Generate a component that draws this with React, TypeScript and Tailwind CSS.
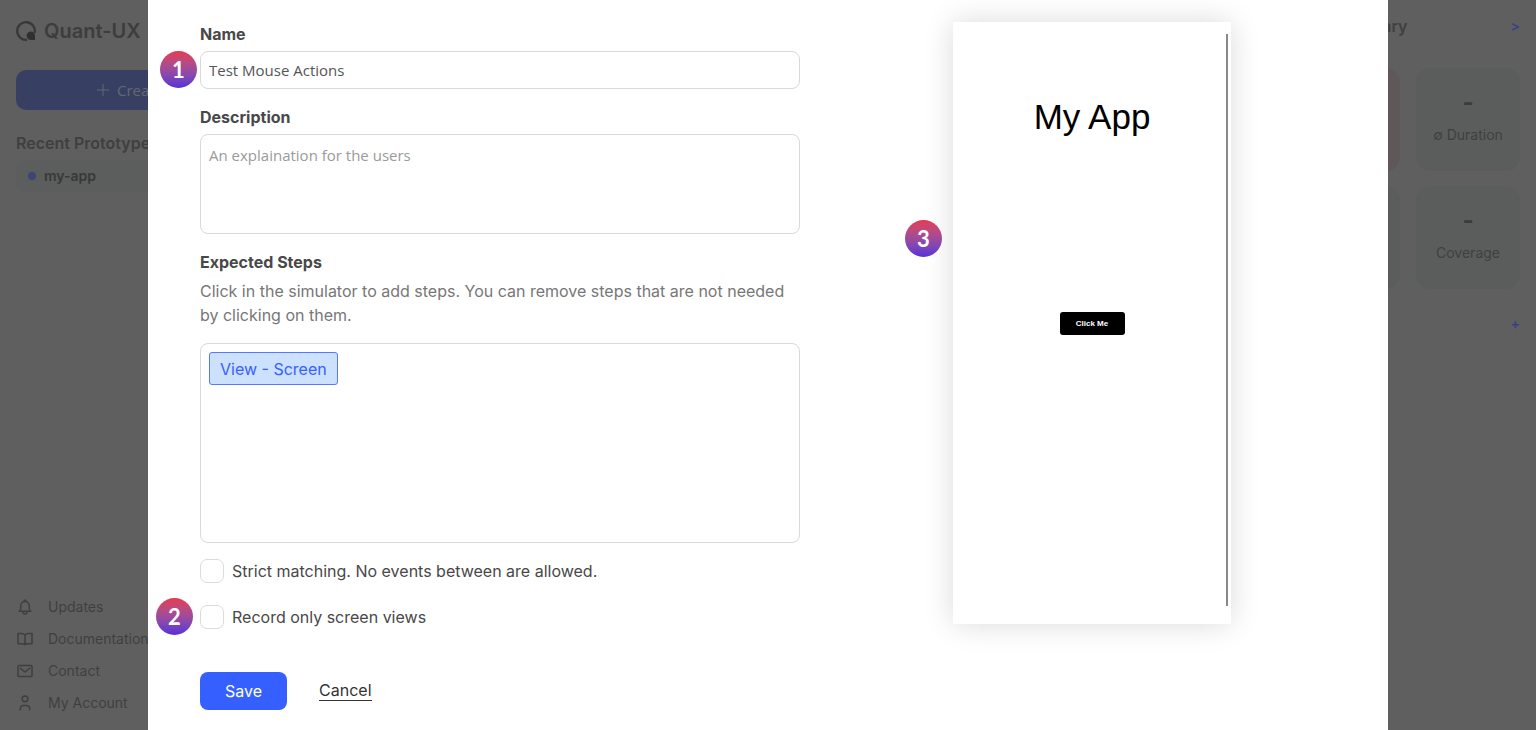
import { useState } from "react";
import type { ReactNode } from "react";

function Logo() {
  return (
    <svg viewBox="0 0 20 20" className="size-5 shrink-0" fill="none" aria-hidden="true">
      <path d="M18.600 12A8.800 8.800 0 1 0 11 18.750" stroke="#383838" strokeWidth="2.300" />
      <path d="M14.800 10.600a4.200 4.200 0 0 1 4.200 4.200V19h-4.200a4.200 4.200 0 1 1 0-8.400z" fill="#303030" />
    </svg>
  );
}

function LineIcon({ children }: { children: ReactNode }) {
  return (
    <svg
      viewBox="0 0 16 16"
      className="size-4 shrink-0"
      fill="none"
      stroke="currentColor"
      strokeWidth="1.500"
      strokeLinejoin="round"
      aria-hidden="true"
    >
      {children}
    </svg>
  );
}

const links = [
  {
    label: "Updates",
    icon: (
      <path d="M1.600 12.300h12.800M2.800 12.300c.8-1.200 1-3.200 1-5.500a4.200 4.200 0 0 1 8.400 0c0 2.300.2 4.300 1 5.500M7.200 2.500V1.200h1.600v1.300M6 12.500v.6a2 2 0 0 0 4 0v-.6" />
    ),
  },
  {
    label: "Documentation",
    icon: (
      <path d="M8 4C7.200 3 6.200 2.500 4.800 2.500H1v10.300h4.200c1.300 0 2.200.2 2.800 1 .6-.8 1.500-1 2.800-1H15V2.500h-3.800C9.800 2.500 8.800 3 8 4zM8 4v9.800" />
    ),
  },
  {
    label: "Contact",
    icon: (
      <path d="M1.900 2.600h12.200a.9.9 0 0 1 .9.9v9.200a.9.9 0 0 1-.9.9H1.900a.9.900 0 0 1-.9-.9V3.500a.9.900 0 0 1 .9-.9zM2.800 4.800L8 9l5.200-4.200" />
    ),
  },
  {
    label: "My Account",
    icon: (
      <>
        <circle cx="8" cy="3.800" r="2.900" />
        <path d="M3.300 15.300v-1.800a3.100 3.100 0 0 1 3.100-3.100h3.200a3.100 3.100 0 0 1 3.100 3.100v1.800" />
      </>
    ),
  },
];

function Sidebar() {
  return (
    <aside className="flex w-[260px] shrink-0 flex-col justify-between px-4 pt-4 pb-[11px]">
      <div>
        <div className="flex h-[30px] items-center gap-2 text-xl font-semibold text-[#3d3d3d]">
          <Logo />
          Quant-UX
        </div>
        <button
          type="button"
          className="mt-6 flex h-10 w-full items-center justify-center gap-2 rounded-[10px] bg-[#374062] font-['Open_Sans',sans-serif] text-[15px] text-[#646772]"
        >
          <svg viewBox="0 0 12 12" className="size-3" stroke="currentColor" aria-hidden="true">
            <path d="M6 0v12M0 6h12" />
          </svg>
          Create
        </button>
        <h2 className="mt-[21px] text-base leading-6 font-semibold text-[#3f3f3f]">Recent Prototypes</h2>
        <a
          href="#my-app"
          className="mt-[5px] flex h-8 items-center gap-2 rounded-[10px] bg-[#5b5e5c] px-3 text-sm font-semibold text-[#383838]"
        >
          <span className="size-2 rounded-full bg-[#3d4477]" />
          my-app
        </a>
      </div>
      <nav className="flex flex-col">
        {links.map((l) => (
          <a
            key={l.label}
            href="#nav"
            className="flex h-8 items-center gap-[15px] pl-px text-sm text-[#3f3f3f]"
          >
            <LineIcon>{l.icon}</LineIcon>
            {l.label}
          </a>
        ))}
      </nav>
    </aside>
  );
}

function Stat({ label, red = false }: { label?: string; red?: boolean }) {
  return (
    <div
      className={`flex h-[103px] flex-col items-center rounded-[14px] pt-[23px] ${
        red ? "bg-[#5f5758]" : "bg-[#5a5d5b]"
      }`}
    >
      {label && (
        <>
          <span className="text-2xl leading-6 font-bold text-[#3b3b3b]">-</span>
          <span className="mt-2 text-sm leading-6 whitespace-nowrap text-[#404040]">{label}</span>
        </>
      )}
    </div>
  );
}

function Summary() {
  return (
    <aside className="w-[240px] shrink-0 pt-3.5 pr-4">
      <div className="flex h-6 items-center justify-between">
        <h2 className="text-base font-semibold text-[#3f3f3f]">Test Summary</h2>
        <a href="#summary" className="text-sm font-semibold text-[#334285]">
          &gt;
        </a>
      </div>
      <div className="mt-[30px] grid grid-cols-2 gap-x-4 gap-y-[15px]">
        <Stat red />
        <Stat label="∅ Duration" />
        <Stat />
        <Stat label="Coverage" />
      </div>
      <div className="mt-[23px] flex justify-end">
        <button type="button" aria-label="Add" className="text-sm leading-6 font-semibold text-[#334285]">
          +
        </button>
      </div>
    </aside>
  );
}

function Badge({ children, place }: { children: ReactNode; place: string }) {
  return (
    <span
      className={`absolute flex size-[37px] items-center justify-center rounded-full bg-linear-to-b from-[#e6394e] to-[#5a2dd8] font-[Lato,sans-serif] text-[22px] font-bold text-white ${place}`}
    >
      {children}
    </span>
  );
}

function Check({ label }: { label: string }) {
  return (
    <label className="flex h-6 items-center gap-2 text-[#484848]">
      <input
        type="checkbox"
        className="size-6 shrink-0 appearance-none rounded-[7px] border border-[#dcdcdc] bg-white checked:bg-[#365fff]"
      />
      {label}
    </label>
  );
}

const field =
  "block w-full rounded-lg border border-[#d9d9d9] bg-white px-2 font-['Open_Sans',sans-serif] text-[15px] text-[#555] outline-none placeholder:text-[#9a9a9a]";
const heading = "block leading-6 font-bold text-[#484848]";

function TestForm() {
  const [steps, setSteps] = useState(["View - Screen"]);
  return (
    <form>
      <label htmlFor="name" className={heading}>
        Name
      </label>
      <div className="relative mt-[5px]">
        <input id="name" defaultValue="Test Mouse Actions" className={`${field} h-[38px]`} />
        <Badge place="top-0 -left-10">1</Badge>
      </div>
      <label htmlFor="description" className={`${heading} mt-4`}>
        Description
      </label>
      <textarea
        id="description"
        placeholder="An explaination for the users"
        className={`${field} mt-[5px] h-[100px] resize-none py-2 leading-6`}
      />
      <h3 className={`${heading} mt-4`}>Expected Steps</h3>
      <p className="mt-[5px] leading-6 text-[#777]">
        Click in the simulator to add steps. You can remove steps that are not needed by clicking on them.
      </p>
      <div className="mt-4 h-[200px] rounded-lg border border-[#d9d9d9] p-2">
        {steps.map((s) => (
          <button
            key={s}
            type="button"
            onClick={() => setSteps(steps.filter((x) => x !== s))}
            className="block h-[33px] rounded-[3px] border border-[#5578ff] bg-[#cce1fd] px-2.5 text-[#365fff]"
          >
            {s}
          </button>
        ))}
      </div>
      <div className="mt-4">
        <Check label="Strict matching. No events between are allowed." />
      </div>
      <div className="relative mt-[22px]">
        <Check label="Record only screen views" />
        <Badge place="-top-[7px] -left-11">2</Badge>
      </div>
      <div className="mt-[43px] flex items-center gap-8 pb-5">
        <button type="button" className="h-[38px] rounded-lg bg-[#365fff] px-[25px] text-white">
          Save
        </button>
        <a href="#cancel" className="border-b border-[#333] leading-[19px] text-[#333]">
          Cancel
        </a>
      </div>
    </form>
  );
}

function Simulator() {
  return (
    <div className="relative mx-auto flex h-[602px] w-[278px] flex-col items-center rounded-xs bg-white pt-[75px] font-['Liberation_Sans',sans-serif] text-black shadow-[0_0_30px_rgba(0,0,0,0.15)]">
      <h1 className="text-[35px] leading-10">My App</h1>
      <button
        type="button"
        className="mt-[175px] h-[23px] w-[65px] rounded-[3px] bg-black text-[8px] font-bold text-white"
      >
        Click Me
      </button>
      <span className="absolute top-3 right-[3px] bottom-[18px] w-[2px] bg-[#888]" />
      <Badge place="top-[198px] -left-12">3</Badge>
    </div>
  );
}

export default function App() {
  return (
    <div className="relative h-screen overflow-hidden bg-[#5f5f5f] font-[Inter,sans-serif] text-base">
      <div className="flex h-full justify-between">
        <Sidebar />
        <Summary />
      </div>
      <div className="absolute inset-0 flex justify-center">
        <main
          role="dialog"
          aria-label="Test settings"
          className="grid w-full max-w-[1240px] grid-cols-[minmax(0,600px)_minmax(0,1fr)] gap-12 bg-white px-[52px] pt-[22px]"
        >
          <TestForm />
          <Simulator />
        </main>
      </div>
    </div>
  );
}
